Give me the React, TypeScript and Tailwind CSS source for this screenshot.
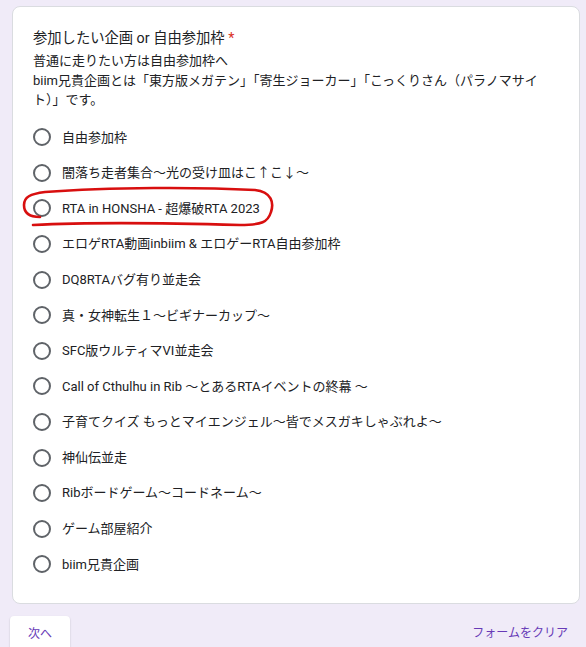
const OPTIONS = [
  "自由参加枠",
  "闇落ち走者集合～光の受け皿はこ↑こ↓～",
  "RTA in HONSHA - 超爆破RTA 2023",
  "エロゲRTA動画inbiim & エロゲーRTA自由参加枠",
  "DQ8RTAバグ有り並走会",
  "真・女神転生１～ビギナーカップ～",
  "SFC版ウルティマVI並走会",
  "Call of Cthulhu in Rib ～とあるRTAイベントの終幕 ～",
  "子育てクイズ もっとマイエンジェル～皆でメスガキしゃぶれよ～",
  "神仙伝並走",
  "Ribボードゲーム～コードネーム～",
  "ゲーム部屋紹介",
  "biim兄貴企画",
]

const FONT = { fontFamily: "Roboto, 'Noto Sans CJK JP', sans-serif" }

export default function App() {
  return (
    <div
      className="relative w-[586px] h-[647px] overflow-hidden bg-[#f0ebf8] pt-[6px] pl-[12px] pr-[6px]"
      style={FONT}
    >
      {/* Question card */}
      <div className="bg-white rounded-lg border border-[#dadce0] px-[20px] pt-[19px] pb-[21px]">
        <h2 className="text-[14.3px] leading-[24px] text-[#202124]">
          参加したい企画 or 自由参加枠<span className="text-[#d93025]"> *</span>
        </h2>
        <p className="mt-[1px] text-[13px] leading-[19.5px] text-[#202124]">
          普通に走りたい方は自由参加枠へ
          <br />
          biim兄貴企画とは「東方版メガテン」「寄生ジョーカー」「こっくりさん（パラノマサイ
          <br />
          ト）」です。
        </p>

        <div className="mt-[10px] flex flex-col">
          {OPTIONS.map((label) => (
            <label key={label} className="h-[35.6px] flex items-center">
              <span className="w-[18px] h-[18px] rounded-full border-2 border-[#5f6368] shrink-0" />
              <span className="ml-[11px] text-[13px] text-[#202124] whitespace-nowrap">{label}</span>
            </label>
          ))}
        </div>
      </div>

      {/* Footer */}
      <div className="mt-[12px] -ml-[2px] flex justify-between items-start">
        <button className="w-[60px] h-[36px] bg-white rounded-[4px] shadow-[0_1px_2px_rgba(0,0,0,0.2)] text-[12px] text-[#673ab7]">
          次へ
        </button>
        <span className="mt-[8px] mr-[12px] text-[12px] text-[#673ab7]">フォームをクリア</span>
      </div>

      {/* hand-drawn red loop */}
      <svg className="absolute inset-0 pointer-events-none" width="586" height="647" viewBox="0 0 586 647">
        <path
          d="M 40 217 C 30 217, 24 214, 24 205 C 24 197, 30 194, 45 192 C 110 187, 200 187, 255 190 C 272 192, 274 203, 271 212 C 268 222, 262 225, 240 225 C 170 223, 90 222, 33 225"
          fill="none"
          stroke="#d80f0f"
          strokeWidth="2.6"
          strokeLinecap="round"
          strokeLinejoin="round"
        />
      </svg>
    </div>
  )
}
